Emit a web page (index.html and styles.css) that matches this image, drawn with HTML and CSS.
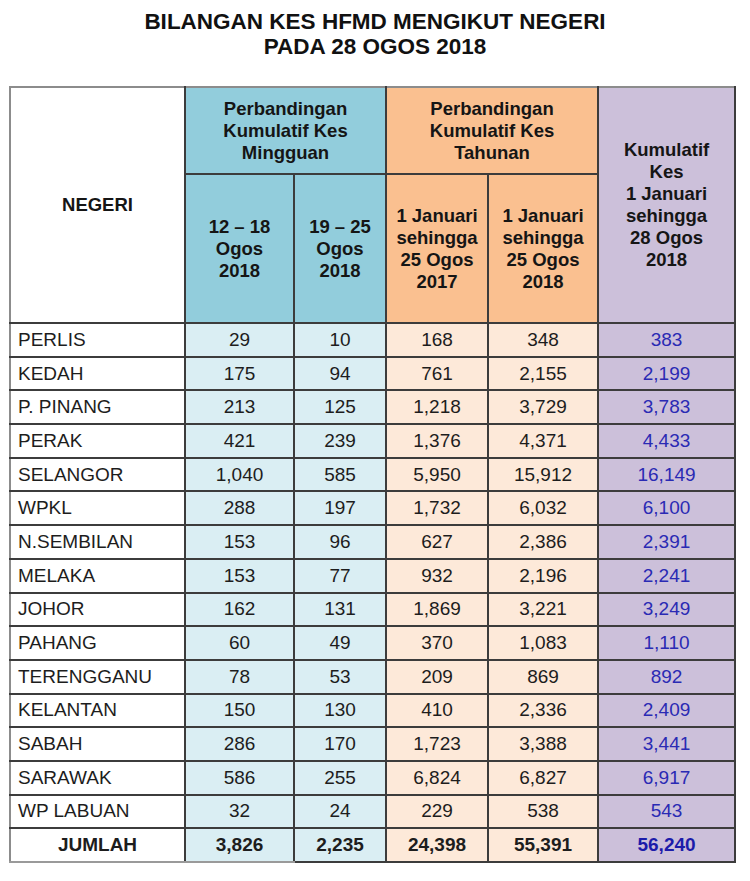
FILE: index.html
```html
<!DOCTYPE html>
<html>
<head>
<meta charset="utf-8">
<link rel="stylesheet" href="styles.css">
</head>
<body>
<h1 class="title">BILANGAN KES HFMD MENGIKUT NEGERI<br>PADA 28 OGOS 2018</h1>
<table class="tbl">
  <colgroup>
    <col class="c-name"><col class="c-w1"><col class="c-w2"><col class="c-y1"><col class="c-y2"><col class="c-k">
  </colgroup>
  <thead>
    <tr class="hrow1">
      <th rowspan="2" class="h-name">NEGERI</th>
      <th colspan="2" class="blue-h">Perbandingan<br>Kumulatif Kes<br>Mingguan</th>
      <th colspan="2" class="orange-h">Perbandingan<br>Kumulatif Kes<br>Tahunan</th>
      <th rowspan="2" class="purple-h">Kumulatif<br>Kes<br>1 Januari<br>sehingga<br>28 Ogos<br>2018</th>
    </tr>
    <tr class="hrow2">
      <th class="blue-h">12 – 18<br>Ogos<br>2018</th>
      <th class="blue-h">19 – 25<br>Ogos<br>2018</th>
      <th class="orange-h">1 Januari<br>sehingga<br>25 Ogos<br>2017</th>
      <th class="orange-h">1 Januari<br>sehingga<br>25 Ogos<br>2018</th>
    </tr>
  </thead>
  <tbody>
    <tr><td class="name">PERLIS</td><td class="b">29</td><td class="b">10</td><td class="o">168</td><td class="o">348</td><td class="p">383</td></tr>
    <tr><td class="name">KEDAH</td><td class="b">175</td><td class="b">94</td><td class="o">761</td><td class="o">2,155</td><td class="p">2,199</td></tr>
    <tr><td class="name">P. PINANG</td><td class="b">213</td><td class="b">125</td><td class="o">1,218</td><td class="o">3,729</td><td class="p">3,783</td></tr>
    <tr><td class="name">PERAK</td><td class="b">421</td><td class="b">239</td><td class="o">1,376</td><td class="o">4,371</td><td class="p">4,433</td></tr>
    <tr><td class="name">SELANGOR</td><td class="b">1,040</td><td class="b">585</td><td class="o">5,950</td><td class="o">15,912</td><td class="p">16,149</td></tr>
    <tr><td class="name">WPKL</td><td class="b">288</td><td class="b">197</td><td class="o">1,732</td><td class="o">6,032</td><td class="p">6,100</td></tr>
    <tr><td class="name">N.SEMBILAN</td><td class="b">153</td><td class="b">96</td><td class="o">627</td><td class="o">2,386</td><td class="p">2,391</td></tr>
    <tr><td class="name">MELAKA</td><td class="b">153</td><td class="b">77</td><td class="o">932</td><td class="o">2,196</td><td class="p">2,241</td></tr>
    <tr><td class="name">JOHOR</td><td class="b">162</td><td class="b">131</td><td class="o">1,869</td><td class="o">3,221</td><td class="p">3,249</td></tr>
    <tr><td class="name">PAHANG</td><td class="b">60</td><td class="b">49</td><td class="o">370</td><td class="o">1,083</td><td class="p">1,110</td></tr>
    <tr><td class="name">TERENGGANU</td><td class="b">78</td><td class="b">53</td><td class="o">209</td><td class="o">869</td><td class="p">892</td></tr>
    <tr><td class="name">KELANTAN</td><td class="b">150</td><td class="b">130</td><td class="o">410</td><td class="o">2,336</td><td class="p">2,409</td></tr>
    <tr><td class="name">SABAH</td><td class="b">286</td><td class="b">170</td><td class="o">1,723</td><td class="o">3,388</td><td class="p">3,441</td></tr>
    <tr><td class="name">SARAWAK</td><td class="b">586</td><td class="b">255</td><td class="o">6,824</td><td class="o">6,827</td><td class="p">6,917</td></tr>
    <tr><td class="name">WP LABUAN</td><td class="b">32</td><td class="b">24</td><td class="o">229</td><td class="o">538</td><td class="p">543</td></tr>
    <tr class="total"><td class="name total-name">JUMLAH</td><td class="b first-b">3,826</td><td class="b">2,235</td><td class="o">24,398</td><td class="o">55,391</td><td class="p">56,240</td></tr>
  </tbody>
</table>
</body>
</html>
```

FILE: styles.css
```css
html, body {
  margin: 0;
  padding: 0;
  background: #ffffff;
}
body {
  font-family: "Liberation Sans", Arial, sans-serif;
  color: #1a1a1a;
  width: 750px;
  height: 881px;
  overflow: hidden;
}
.title {
  margin: 9px 0 0 0;
  font-size: 22.5px;
  line-height: 25px;
  font-weight: bold;
  text-align: center;
  color: #111;
  padding-left: 0;
}
.tbl {
  margin: 27px 0 0 9px;
  border-collapse: collapse;
  table-layout: fixed;
  width: 725px;
}
.c-name { width: 175px; }
.c-w1 { width: 109px; }
.c-w2 { width: 92px; }
.c-y1 { width: 102px; }
.c-y2 { width: 110px; }
.c-k { width: 137px; }

.tbl th, .tbl td {
  border: 2px solid #3c3c3c;
  padding: 0;
  text-align: center;
  vertical-align: middle;
  overflow: hidden;
  white-space: nowrap;
}
.tbl th {
  font-weight: bold;
  font-size: 18.5px;
  line-height: 22px;
  color: #151515;
}
.hrow1 { height: 87px; }
.hrow2 { height: 149px; }
.hrow1 th { border-top-color: #8c8c8c; }
.h-name {
  background: #ffffff;
  border-left-color: #8c8c8c !important;
}
.blue-h { background: #92cddc; }
.orange-h { background: #fac090; }
.purple-h { background: #ccc0da; padding-top: 2px; }

.tbl tbody tr { height: 33.7px; }
.tbl td {
  font-size: 19px;
  line-height: 22px;
  color: #1d1d1d;
}
.tbl td.name {
  text-align: left;
  padding-left: 7px;
  background: #ffffff;
  border-left-color: #8c8c8c;
}
.tbl td.b { background: #daeef3; }
.tbl td.o { background: #fde9d9; }
.tbl td.p { background: #ccc0da; color: #2a2ab4; }

.total td {
  font-weight: bold;
  font-size: 19px;
}
.tbl td.total-name {
  text-align: center;
  padding-left: 0;
  border-bottom-color: #9a9a9a;
}
.tbl .total td.first-b { border-bottom-color: #9a9a9a; }
.total td.p { color: #1c1caa; }
```
